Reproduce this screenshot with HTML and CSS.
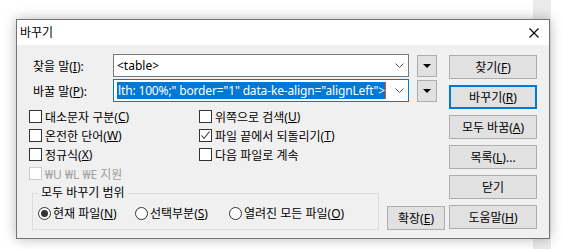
FILE: index.html
```html
<!DOCTYPE html>
<html lang="ko">
<head>
    <meta charset="UTF-8">
    <title>바꾸기</title>
    <link rel="stylesheet" href="styles.css">
</head>
<body>
    <div class="dialog">
        <div class="titlebar">
            <span class="title">바꾸기</span>
            <svg class="close" width="10" height="10" viewBox="0 0 10 10">
                <path d="M0.5 0.5 L9.5 9.5 M9.5 0.5 L0.5 9.5" stroke="#000" stroke-width="1.1" fill="none"/>
            </svg>
        </div>

        <div class="content">
            <div class="main">
                <div class="field-row">
                    <label class="field-label">찾을 말(<u>I</u>):</label>
                    <div class="combo">
                        <span class="combo-text">&lt;table&gt;</span>
                        <svg class="chevron" width="9" height="5" viewBox="0 0 9 5"><path d="M0.5 0.5 L4.5 4.5 L8.5 0.5" stroke="#555" fill="none"/></svg>
                    </div>
                    <div class="drop"><span class="tri"></span></div>
                </div>
                <div class="field-row second">
                    <label class="field-label">바꿀 말(<u>P</u>):</label>
                    <div class="combo focused">
                        <span class="combo-text tight"><span class="sel">lth: 100%;" border="1" data-ke-align="alignLeft"&gt;</span><span class="caret"></span></span>
                        <svg class="chevron" width="9" height="5" viewBox="0 0 9 5"><path d="M0.5 0.5 L4.5 4.5 L8.5 0.5" stroke="#555" fill="none"/></svg>
                    </div>
                    <div class="drop"><span class="tri"></span></div>
                </div>

                <div class="options">
                    <div class="check"><span class="box"></span>대소문자 구분(<u>C</u>)</div>
                    <div class="check"><span class="box"></span>위쪽으로 검색(<u>U</u>)</div>
                    <div class="check"><span class="box"></span>온전한 단어(<u>W</u>)</div>
                    <div class="check"><span class="box checked"><svg width="11" height="11" viewBox="0 0 11 11"><path d="M1.5 5.5 L4 8.5 L9.5 1.5" stroke="#333" stroke-width="1.1" fill="none"/></svg></span>파일 끝에서 되돌리기(<u>T</u>)</div>
                    <div class="check"><span class="box"></span>정규식(<u>X</u>)</div>
                    <div class="check"><span class="box"></span>다음 파일로 계속</div>
                    <div class="check disabled"><span class="box"></span>₩U ₩L ₩E 지원</div>
                </div>

                <div class="bottom-row">
                    <fieldset class="scope">
                        <legend>모두 바꾸기 범위</legend>
                        <div class="radios">
                            <div class="radio r1"><span class="dot on"></span>현재 파일(<u>N</u>)</div>
                            <div class="radio r2"><span class="dot"></span>선택부분(<u>S</u>)</div>
                            <div class="radio"><span class="dot"></span>열려진 모든 파일(<u>O</u>)</div>
                        </div>
                    </fieldset>
                    <button class="btn expand">확장(<u>E</u>)</button>
                </div>
            </div>

            <div class="buttons">
                <button class="btn">찾기(<u>F</u>)</button>
                <button class="btn default">바꾸기(<u>R</u>)</button>
                <button class="btn">모두 바꿈(<u>A</u>)</button>
                <button class="btn">목록(<u>L</u>)...</button>
                <button class="btn">닫기</button>
                <button class="btn">도움말(<u>H</u>)</button>
            </div>
        </div>
    </div>
</body>
</html>
```

FILE: styles.css
```css
body {
    margin: 0;
    height: 249px;
    overflow: hidden;
    font-family: "Noto Sans", "Noto Sans CJK KR", sans-serif;
    font-size: 12px;
    color: #000;
    background: linear-gradient(to right, #fff 533px, #ebebeb 533px, #ebebeb 551px, #fff 551px);
}
u {
    text-decoration: underline;
    text-underline-offset: 1px;
}
.dialog {
    margin: 19px 0 0 16px;
    width: 534px;
    height: 220px;
    box-sizing: border-box;
    border: 1px solid #737373;
    background: #f0f0f0;
    box-shadow: 0 0 12px rgba(0, 0, 0, 0.28);
}
.titlebar {
    height: 25px;
    background: #fff;
    display: flex;
    align-items: center;
    justify-content: space-between;
    padding: 0 10px 0 3px;
}
.title {
    line-height: 16px;
}
.close {
    display: block;
}
.content {
    display: flex;
    padding-top: 9px;
}
.main {
    width: 432px;
}
.field-row {
    display: flex;
    align-items: center;
    height: 23px;
    margin-left: 16px;
}
.field-row.second {
    margin-top: 2px;
}
.field-label {
    width: 80px;
}
.combo {
    width: 296px;
    height: 23px;
    box-sizing: border-box;
    border: 1px solid #7a7a7a;
    background: #fff;
    display: flex;
    align-items: center;
    padding: 0 4px 0 3px;
    overflow: hidden;
}
.combo.focused {
    border-color: #0078d7;
}
.combo-text {
    flex: 1;
    display: flex;
    align-items: center;
    white-space: nowrap;
    overflow: hidden;
    line-height: 17px;
}
.combo-text.tight {
    letter-spacing: -0.15px;
}
.sel {
    background: #0078d7;
    color: #fff;
    padding-left: 1px;
}
.caret {
    display: inline-block;
    flex: none;
    width: 1px;
    height: 17px;
    background: #e06000;
}
.chevron {
    display: block;
    margin-left: 6px;
}
.drop {
    width: 20px;
    height: 22px;
    box-sizing: border-box;
    margin-left: 8px;
    border: 1px solid #adadad;
    background: #e1e1e1;
    display: flex;
    align-items: center;
    justify-content: center;
}
.tri {
    width: 0;
    height: 0;
    border-left: 4px solid transparent;
    border-right: 4px solid transparent;
    border-top: 4px solid #000;
}
.options {
    display: grid;
    grid-template-columns: 170px auto;
    grid-auto-rows: 19px;
    margin: 5px 0 0 12px;
}
.check {
    display: flex;
    align-items: center;
    white-space: nowrap;
}
.box {
    width: 13px;
    height: 13px;
    box-sizing: border-box;
    border: 1px solid #333;
    background: #fff;
    margin-right: 3px;
    display: flex;
    align-items: center;
    justify-content: center;
}
.check.disabled {
    color: #a0a0a0;
}
.check.disabled .box {
    border-color: #cccccc;
}
.bottom-row {
    display: flex;
    align-items: flex-end;
    margin: 2px 0 0 15px;
}
.scope {
    width: 347px;
    height: 45px;
    box-sizing: border-box;
    margin: 0;
    padding: 0 0 0 5px;
    border: 1px solid #dcdcdc;
}
.scope legend {
    padding: 0 3px;
    line-height: 16px;
}
.radios {
    display: flex;
    align-items: center;
    height: 18px;
    margin-top: 3px;
}
.radio {
    display: flex;
    align-items: center;
    white-space: nowrap;
}
.radio.r1 {
    width: 97px;
}
.radio.r2 {
    width: 94px;
}
.dot {
    width: 13px;
    height: 13px;
    box-sizing: border-box;
    border: 1px solid #333;
    border-radius: 50%;
    background: #fff;
    margin-right: 2px;
    display: flex;
    align-items: center;
    justify-content: center;
}
.dot.on::after {
    content: "";
    width: 7px;
    height: 7px;
    border-radius: 50%;
    background: #333;
}
.buttons {
    width: 88px;
    margin-top: 1px;
    display: flex;
    flex-direction: column;
    gap: 6px;
}
.btn {
    height: 24px;
    box-sizing: border-box;
    border: 1px solid #adadad;
    background: #e1e1e1;
    font-family: inherit;
    font-size: 12px;
    color: #000;
    padding: 0;
}
.btn.default {
    border: 2px solid #0078d7;
}
.btn.expand {
    width: 58px;
    margin-left: 8px;
}
```
